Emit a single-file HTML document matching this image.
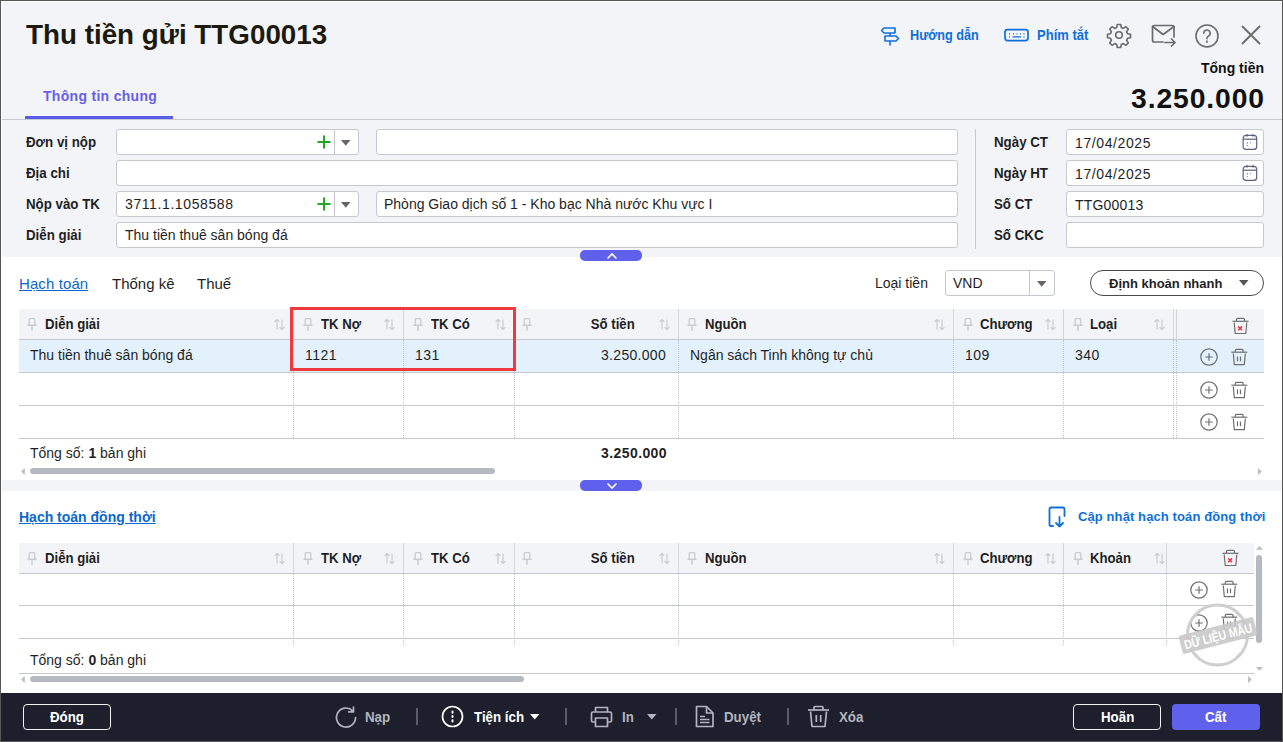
<!DOCTYPE html>
<html><head><meta charset="utf-8">
<style>
*{box-sizing:border-box;margin:0;padding:0}
html,body{width:1283px;height:742px;overflow:hidden;background:#fff}
body{position:relative;font-family:"Liberation Sans",sans-serif;color:#1f1f1f}
.a{position:absolute}
.t{position:absolute;white-space:nowrap;line-height:1}
.b{font-weight:bold}
.r14{font-size:14px}
.n14{font-size:14px;letter-spacing:.6px}
.b13{font-size:13px;font-weight:bold}
.lb{letter-spacing:.2px}
.hl2{font-size:14px;font-weight:bold;transform:scaleX(.95);transform-origin:0 0}
.hh{font-size:14px;font-weight:bold;transform:scaleX(.94);transform-origin:0 0}
.hr{transform-origin:100% 0}
.ff{font-size:14px;font-weight:bold;transform:scaleX(.95);transform-origin:0 0}
.inp{position:absolute;background:#fff;border:1px solid #c6c8d0;border-radius:3px;height:26px}
.hl{position:absolute;height:1px;background:#c9cbd3}
.vl{position:absolute;width:1px;background:#c9cbd3}
.vd{position:absolute;width:0;border-left:1px dotted #c2c4cc}
svg{position:absolute;overflow:visible}
</style></head><body>
<!-- outer frame -->
<div class="a" style="left:0;top:0;width:1283px;height:742px;background:#fff"></div>
<!-- header + form bg -->
<div class="a" style="left:1px;top:1px;width:1281px;height:256px;background:#f3f4f8"></div>

<!-- TITLE -->
<div class="t b" style="left:26px;top:21px;font-size:27.8px;color:#1c1a0e">Thu tiền gửi TTG00013</div>

<!-- header right -->
<svg style="left:880px;top:26px" width="20" height="20" viewBox="0 0 20 20" fill="none" stroke="#0f6fdb" stroke-width="1.6" stroke-linejoin="round">
 <path d="M4 2H15V7H4L1.5 4.5Z"/><path d="M5 10H16L18.5 12.5L16 15H5Z"/><path d="M10 7V10M10 15V19.5"/>
</svg>
<div class="t b" style="left:909.8px;top:28.2px;font-size:14px;transform:scaleX(.905);transform-origin:0 0;color:#0f6fdb">Hướng dẫn</div>
<svg style="left:1004px;top:28px" width="26" height="14" viewBox="0 0 26 14" fill="none" stroke="#0f6fdb">
 <rect x="1" y="1.6" width="23" height="11" rx="2.5" stroke-width="1.7"/>
 <path d="M5 5.8h1M9 5.8h1M12.5 5.8h1M16 5.8h1M19.5 5.8h1M5 8.8h1M8.5 8.8h8.5M19.5 8.8h1" stroke-width="1.2"/>
</svg>
<div class="t b" style="left:1037px;top:28.2px;font-size:14px;transform:scaleX(.93);transform-origin:0 0;color:#0f6fdb">Phím tắt</div>
<!-- gear -->
<svg style="left:1107px;top:23px" width="24" height="24" viewBox="0 0 24 24" fill="none" stroke="#6b6b6b" stroke-width="1.6" stroke-linejoin="round">
 <path d="M10.3 1.5h3.4l.6 3 2 .9 2.6-1.7 2.4 2.4-1.7 2.6.9 2 3 .6v3.4l-3 .6-.9 2 1.7 2.6-2.4 2.4-2.6-1.7-2 .9-.6 3h-3.4l-.6-3-2-.9-2.6 1.7-2.4-2.4 1.7-2.6-.9-2-3-.6v-3.4l3-.6.9-2-1.7-2.6 2.4-2.4 2.6 1.7 2-.9z"/>
 <circle cx="12" cy="12" r="3.3"/>
</svg>
<!-- mail -->
<svg style="left:1150px;top:24px" width="27" height="24" viewBox="0 0 27 24" fill="none" stroke="#6b6b6b" stroke-width="1.7" stroke-linecap="round" stroke-linejoin="round">
 <path d="M13 18H4.5Q2.5 18 2.5 16V3.5Q2.5 1.5 4.5 1.5H22Q24 1.5 24 3.5V13"/><path d="M2.5 2.5L13.2 10.5L24 2.5"/><path d="M15 18.5H25M21.5 15L25 18.5L21.5 22"/>
</svg>
<!-- help -->
<svg style="left:1195px;top:24px" width="24" height="24" viewBox="0 0 24 24" fill="none" stroke="#6b6b6b" stroke-width="1.6" stroke-linecap="round">
 <circle cx="12" cy="12" r="11"/><path d="M8.8 9.2a3.2 3.2 0 1 1 4.6 2.9c-.9.5-1.4 1.1-1.4 2.1v.6"/><circle cx="12" cy="17.6" r=".4" fill="#6b6b6b"/>
</svg>
<!-- close -->
<svg style="left:1241px;top:25px" width="20" height="20" viewBox="0 0 20 20" fill="none" stroke="#6b6b6b" stroke-width="1.8">
 <path d="M1 1L19 19M19 1L1 19"/>
</svg>

<div class="t b" style="right:19px;top:61px;font-size:14px;color:#111">Tổng tiền</div>
<div class="t b" style="right:18px;top:83.5px;font-size:28.3px;letter-spacing:.9px;color:#111">3.250.000</div>

<!-- tab -->
<div class="t b" style="left:43px;top:89px;font-size:14px;letter-spacing:.3px;color:#6660e6">Thông tin chung</div>
<div class="a" style="left:25px;top:116px;width:148px;height:3px;background:#5b5bea"></div>
<div class="hl" style="left:1px;top:119px;width:1281px;background:#c8cad1"></div>

<!-- FORM -->
<div class="t hl2" style="left:25.5px;top:135.25px">Đơn vị nộp</div>
<div class="t hl2" style="left:25.5px;top:166.25px">Địa chi</div>
<div class="t hl2" style="left:25.5px;top:197.25px">Nộp vào TK</div>
<div class="t hl2" style="left:25.5px;top:228.25px">Diễn giải</div>

<div class="inp" style="left:116px;top:129px;width:243px"></div>
<div class="vl" style="left:334px;top:130px;height:24px;background:#c6c8d0"></div>
<svg style="left:317px;top:135px" width="14" height="14" viewBox="0 0 14 14" stroke="#22a722" stroke-width="2"><path d="M7 0.5V13.5M0.5 7H13.5"/></svg>
<svg style="left:341px;top:140px" width="10" height="6" viewBox="0 0 10 6"><path d="M0 0H9.5L4.75 5.8Z" fill="#666"/></svg>
<div class="inp" style="left:376px;top:129px;width:582px"></div>

<div class="inp" style="left:116px;top:160px;width:842px"></div>

<div class="inp" style="left:116px;top:191px;width:243px"></div>
<div class="vl" style="left:334px;top:192px;height:24px;background:#c6c8d0"></div>
<svg style="left:317px;top:197px" width="14" height="14" viewBox="0 0 14 14" stroke="#22a722" stroke-width="2"><path d="M7 0.5V13.5M0.5 7H13.5"/></svg>
<svg style="left:341px;top:202px" width="10" height="6" viewBox="0 0 10 6"><path d="M0 0H9.5L4.75 5.8Z" fill="#666"/></svg>
<div class="t n14" style="left:125px;top:197px">3711.1.1058588</div>
<div class="inp" style="left:376px;top:191px;width:582px"></div>
<div class="t r14" style="left:384px;top:197px">Phòng Giao dịch số 1 - Kho bạc Nhà nước Khu vực I</div>

<div class="inp" style="left:116px;top:222px;width:842px"></div>
<div class="t r14" style="left:125px;top:228px">Thu tiền thuê sân bóng đá</div>

<!-- right form -->
<div class="vl" style="left:975px;top:129px;height:120px;background:#c6c8d0"></div>
<div class="t hl2" style="left:993.5px;top:135.25px">Ngày CT</div>
<div class="t hl2" style="left:993.5px;top:166.25px">Ngày HT</div>
<div class="t hl2" style="left:993.5px;top:197.25px">Số CT</div>
<div class="t hl2" style="left:993.5px;top:228.25px">Số CKC</div>
<div class="inp" style="left:1066px;top:129px;width:198px"></div>
<div class="inp" style="left:1066px;top:160px;width:198px"></div>
<div class="inp" style="left:1066px;top:191px;width:198px"></div>
<div class="inp" style="left:1066px;top:222px;width:198px"></div>
<div class="t n14" style="left:1075px;top:136px">17/04/2025</div>
<svg style="left:1242px;top:134px" width="16" height="16" viewBox="0 0 16 16" fill="none" stroke="#5b6180" stroke-width="1.2"><rect x="1.1" y="1.4" width="13.6" height="14" rx="3"/><path d="M1.1 5.2H14.7"/><path d="M5 .2V2.4M11 .2V2.4" stroke-width="1.5"/><path d="M5.3 8.3V9.6M8 8.8H8.8M5.3 11.2V11.9" stroke-width="1.1"/></svg>
<svg style="left:1242px;top:165px" width="16" height="16" viewBox="0 0 16 16" fill="none" stroke="#5b6180" stroke-width="1.2"><rect x="1.1" y="1.4" width="13.6" height="14" rx="3"/><path d="M1.1 5.2H14.7"/><path d="M5 .2V2.4M11 .2V2.4" stroke-width="1.5"/><path d="M5.3 8.3V9.6M8 8.8H8.8M5.3 11.2V11.9" stroke-width="1.1"/></svg>
<div class="t n14" style="left:1075px;top:167px">17/04/2025</div>
<div class="t n14" style="left:1075px;top:197.5px;letter-spacing:.2px">TTG00013</div>

<!-- collapse btn -->
<div class="a" style="left:580px;top:250px;width:62px;height:11px;border-radius:5px;background:#5f60ec"></div>
<svg style="left:606px;top:252px" width="12" height="8" viewBox="0 0 12 8" fill="none" stroke="#fff" stroke-width="1.6"><path d="M1.5 6.5L6 2L10.5 6.5"/></svg>

<!-- GEN START -->
<!-- tabs -->
<div class="t" style="left:19px;top:276px;font-size:15px;letter-spacing:.1px;color:#0d66c9;text-decoration:underline;text-underline-offset:1px">Hạch toán</div>
<div class="t" style="left:112px;top:276px;font-size:15px">Thống kê</div>
<div class="t" style="left:197px;top:276px;font-size:15px">Thuế</div>
<div class="t r14" style="left:875px;top:276px">Loại tiền</div>
<div class="inp" style="left:945px;top:270px;width:110px"></div>
<div class="vl" style="left:1029px;top:271px;height:24px;background:#c6c8d0"></div>
<div class="t r14" style="left:953px;top:276px">VND</div>
<svg style="left:1037px;top:281px" width="10" height="6" viewBox="0 0 10 6"><path d="M0 0H9.5L4.75 5.8Z" fill="#666"/></svg>
<div class="a" style="left:1090px;top:270px;width:174px;height:26px;border:1px solid #4a4a4a;border-radius:13px;background:#fff"></div>
<div class="t b13" style="left:1109px;top:277px">Định khoản nhanh</div>
<svg style="left:1239px;top:280px" width="10" height="6" viewBox="0 0 10 6"><path d="M0 0H9.5L4.75 5.8Z" fill="#555"/></svg>
<div class="a" style="left:19px;top:309px;width:1245px;height:30px;background:#f3f4f8"></div>
<div class="hl" style="left:19px;top:339px;width:1245px;background:#c6c8cf"></div>
<div class="a" style="left:19px;top:340px;width:1245px;height:32px;background:#e3f1fd"></div>
<div class="hl" style="left:19px;top:372px;width:1245px;background:#c6c8cf"></div>
<div class="hl" style="left:19px;top:405px;width:1245px;background:#c6c8cf"></div>
<div class="hl" style="left:19px;top:438px;width:1245px;background:#c6c8cf"></div>
<div class="vl" style="left:293px;top:309px;height:30px;background:#d3d5db"></div>
<div class="vd" style="left:293px;top:340px;height:98px"></div>
<div class="vl" style="left:403px;top:309px;height:30px;background:#d3d5db"></div>
<div class="vd" style="left:403px;top:340px;height:98px"></div>
<div class="vl" style="left:514px;top:309px;height:30px;background:#d3d5db"></div>
<div class="vd" style="left:514px;top:340px;height:98px"></div>
<div class="vl" style="left:678px;top:309px;height:30px;background:#d3d5db"></div>
<div class="vd" style="left:678px;top:340px;height:98px"></div>
<div class="vl" style="left:953px;top:309px;height:30px;background:#d3d5db"></div>
<div class="vd" style="left:953px;top:340px;height:98px"></div>
<div class="vl" style="left:1063px;top:309px;height:30px;background:#d3d5db"></div>
<div class="vd" style="left:1063px;top:340px;height:98px"></div>
<div class="vl" style="left:1173px;top:309px;height:30px;background:#d3d5db"></div>
<div class="vd" style="left:1173px;top:340px;height:98px"></div>
<div class="vl" style="left:1176px;top:309px;height:30px;background:#d3d5db"></div>
<div class="vd" style="left:1176px;top:340px;height:98px"></div>
<svg style="left:27px;top:318px" width="10" height="13" viewBox="0 0 10 13" fill="none" stroke="#c9ccd2" stroke-width="1.3" stroke-linejoin="round"><path d="M2.2 7V1.8Q2.2.7 3.3.7H6.7Q7.8.7 7.8 1.8V7"/><path d="M.5 7.3H9.5" stroke-width="1.5"/><path d="M5 7.5V12.7" stroke-width="1.5"/></svg>
<svg style="left:303px;top:318px" width="10" height="13" viewBox="0 0 10 13" fill="none" stroke="#c9ccd2" stroke-width="1.3" stroke-linejoin="round"><path d="M2.2 7V1.8Q2.2.7 3.3.7H6.7Q7.8.7 7.8 1.8V7"/><path d="M.5 7.3H9.5" stroke-width="1.5"/><path d="M5 7.5V12.7" stroke-width="1.5"/></svg>
<svg style="left:413px;top:318px" width="10" height="13" viewBox="0 0 10 13" fill="none" stroke="#c9ccd2" stroke-width="1.3" stroke-linejoin="round"><path d="M2.2 7V1.8Q2.2.7 3.3.7H6.7Q7.8.7 7.8 1.8V7"/><path d="M.5 7.3H9.5" stroke-width="1.5"/><path d="M5 7.5V12.7" stroke-width="1.5"/></svg>
<svg style="left:522px;top:318px" width="10" height="13" viewBox="0 0 10 13" fill="none" stroke="#c9ccd2" stroke-width="1.3" stroke-linejoin="round"><path d="M2.2 7V1.8Q2.2.7 3.3.7H6.7Q7.8.7 7.8 1.8V7"/><path d="M.5 7.3H9.5" stroke-width="1.5"/><path d="M5 7.5V12.7" stroke-width="1.5"/></svg>
<svg style="left:687px;top:318px" width="10" height="13" viewBox="0 0 10 13" fill="none" stroke="#c9ccd2" stroke-width="1.3" stroke-linejoin="round"><path d="M2.2 7V1.8Q2.2.7 3.3.7H6.7Q7.8.7 7.8 1.8V7"/><path d="M.5 7.3H9.5" stroke-width="1.5"/><path d="M5 7.5V12.7" stroke-width="1.5"/></svg>
<svg style="left:963px;top:318px" width="10" height="13" viewBox="0 0 10 13" fill="none" stroke="#c9ccd2" stroke-width="1.3" stroke-linejoin="round"><path d="M2.2 7V1.8Q2.2.7 3.3.7H6.7Q7.8.7 7.8 1.8V7"/><path d="M.5 7.3H9.5" stroke-width="1.5"/><path d="M5 7.5V12.7" stroke-width="1.5"/></svg>
<svg style="left:1073px;top:318px" width="10" height="13" viewBox="0 0 10 13" fill="none" stroke="#c9ccd2" stroke-width="1.3" stroke-linejoin="round"><path d="M2.2 7V1.8Q2.2.7 3.3.7H6.7Q7.8.7 7.8 1.8V7"/><path d="M.5 7.3H9.5" stroke-width="1.5"/><path d="M5 7.5V12.7" stroke-width="1.5"/></svg>
<svg style="left:274px;top:319px" width="11" height="11" viewBox="0 0 11 11" fill="none" stroke="#c9ccd2" stroke-width="1.2"><path d="M3 .5V10.5M.6 2.8L3 .5L5.4 2.8"/><path d="M8 .5V10.5M5.6 8.2L8 10.5L10.4 8.2"/></svg>
<svg style="left:384px;top:319px" width="11" height="11" viewBox="0 0 11 11" fill="none" stroke="#c9ccd2" stroke-width="1.2"><path d="M3 .5V10.5M.6 2.8L3 .5L5.4 2.8"/><path d="M8 .5V10.5M5.6 8.2L8 10.5L10.4 8.2"/></svg>
<svg style="left:495px;top:319px" width="11" height="11" viewBox="0 0 11 11" fill="none" stroke="#c9ccd2" stroke-width="1.2"><path d="M3 .5V10.5M.6 2.8L3 .5L5.4 2.8"/><path d="M8 .5V10.5M5.6 8.2L8 10.5L10.4 8.2"/></svg>
<svg style="left:659px;top:319px" width="11" height="11" viewBox="0 0 11 11" fill="none" stroke="#c9ccd2" stroke-width="1.2"><path d="M3 .5V10.5M.6 2.8L3 .5L5.4 2.8"/><path d="M8 .5V10.5M5.6 8.2L8 10.5L10.4 8.2"/></svg>
<svg style="left:934px;top:319px" width="11" height="11" viewBox="0 0 11 11" fill="none" stroke="#c9ccd2" stroke-width="1.2"><path d="M3 .5V10.5M.6 2.8L3 .5L5.4 2.8"/><path d="M8 .5V10.5M5.6 8.2L8 10.5L10.4 8.2"/></svg>
<svg style="left:1045px;top:319px" width="11" height="11" viewBox="0 0 11 11" fill="none" stroke="#c9ccd2" stroke-width="1.2"><path d="M3 .5V10.5M.6 2.8L3 .5L5.4 2.8"/><path d="M8 .5V10.5M5.6 8.2L8 10.5L10.4 8.2"/></svg>
<svg style="left:1154px;top:319px" width="11" height="11" viewBox="0 0 11 11" fill="none" stroke="#c9ccd2" stroke-width="1.2"><path d="M3 .5V10.5M.6 2.8L3 .5L5.4 2.8"/><path d="M8 .5V10.5M5.6 8.2L8 10.5L10.4 8.2"/></svg>
<div class="t hh" style="left:45px;top:316.65px">Diễn giải</div>
<div class="t hh" style="left:321px;top:316.65px">TK Nợ</div>
<div class="t hh" style="left:431px;top:316.65px">TK Có</div>
<div class="t hh hr" style="right:648.5px;top:316.65px">Số tiền</div>
<div class="t hh" style="left:705px;top:316.65px">Nguồn</div>
<div class="t hh" style="left:980px;top:316.65px">Chương</div>
<div class="t hh" style="left:1090px;top:316.65px">Loại</div>
<svg style="left:1232px;top:317.5px" width="17" height="17" viewBox="0 0 17 17" fill="none" stroke="#6f6f6f" stroke-width="1.2" stroke-linejoin="round"><path d="M.5 3.3H16.5"/><path d="M4.5 3.3V1.6Q4.5.4 5.7.4H11.3Q12.5.4 12.5 1.6V3.3"/><path d="M2.2 4.5L3.2 15.5H13.8L14.8 4.5"/><path d="M6.2 8.4L10 12.2M10 8.4L6.2 12.2" stroke="#ef3340" stroke-width="1.5"/></svg>
<div class="t r14" style="left:30px;top:348.15px">Thu tiền thuê sân bóng đá</div>
<div class="t n14" style="left:305px;top:348.15px;letter-spacing:.5px">1121</div>
<div class="t n14" style="left:415px;top:348.15px;letter-spacing:.5px">131</div>
<div class="t n14" style="right:617px;top:348.15px;letter-spacing:.3px">3.250.000</div>
<div class="t r14" style="left:690px;top:348.15px">Ngân sách Tinh không tự chủ</div>
<div class="t n14" style="left:965px;top:348.15px;letter-spacing:.5px">109</div>
<div class="t n14" style="left:1075px;top:348.15px;letter-spacing:.5px">340</div>
<svg style="left:1199.5px;top:348px" width="18" height="18" viewBox="0 0 18 18" fill="none" stroke="#6f6f6f" stroke-width="1.2"><circle cx="9" cy="9" r="8.2"/><path d="M5.2 9H12.8M9 5.2V12.8"/></svg>
<svg style="left:1231px;top:348.7px" width="17" height="17" viewBox="0 0 17 17" fill="none" stroke="#6f6f6f" stroke-width="1.2" stroke-linejoin="round"><path d="M.3 3.2H16.3"/><path d="M4.3 3.2V1.5Q4.3.3 5.5.3H10.9Q12.1.3 12.1 1.5V3.2"/><path d="M2.3 4.5L3.3 15.7H13.3L14.3 4.5"/><path d="M6.5 7.6V12.2M9.5 7.6V12.2"/></svg>
<svg style="left:1199.5px;top:381px" width="18" height="18" viewBox="0 0 18 18" fill="none" stroke="#6f6f6f" stroke-width="1.2"><circle cx="9" cy="9" r="8.2"/><path d="M5.2 9H12.8M9 5.2V12.8"/></svg>
<svg style="left:1231px;top:381.7px" width="17" height="17" viewBox="0 0 17 17" fill="none" stroke="#6f6f6f" stroke-width="1.2" stroke-linejoin="round"><path d="M.3 3.2H16.3"/><path d="M4.3 3.2V1.5Q4.3.3 5.5.3H10.9Q12.1.3 12.1 1.5V3.2"/><path d="M2.3 4.5L3.3 15.7H13.3L14.3 4.5"/><path d="M6.5 7.6V12.2M9.5 7.6V12.2"/></svg>
<svg style="left:1199.5px;top:413px" width="18" height="18" viewBox="0 0 18 18" fill="none" stroke="#6f6f6f" stroke-width="1.2"><circle cx="9" cy="9" r="8.2"/><path d="M5.2 9H12.8M9 5.2V12.8"/></svg>
<svg style="left:1231px;top:413.7px" width="17" height="17" viewBox="0 0 17 17" fill="none" stroke="#6f6f6f" stroke-width="1.2" stroke-linejoin="round"><path d="M.3 3.2H16.3"/><path d="M4.3 3.2V1.5Q4.3.3 5.5.3H10.9Q12.1.3 12.1 1.5V3.2"/><path d="M2.3 4.5L3.3 15.7H13.3L14.3 4.5"/><path d="M6.5 7.6V12.2M9.5 7.6V12.2"/></svg>
<div class="a" style="left:290px;top:307px;width:226px;height:64px;border:3px solid #f0393f"></div>
<div class="t r14" style="left:30px;top:446.15px">Tổng số: <b>1</b> bản ghi</div>
<div class="t b" style="right:616px;top:446.15px;font-size:14px;letter-spacing:.4px">3.250.000</div>
<svg style="left:21px;top:468px" width="4" height="7" viewBox="0 0 4 7"><path d="M3.8 0V7L0 3.5Z" fill="#b9bcc3"/></svg>
<div class="a" style="left:30px;top:468px;width:465px;height:6px;border-radius:3px;background:#b5b9c1"></div>
<svg style="left:1258px;top:468px" width="4" height="7" viewBox="0 0 4 7"><path d="M0 0V7L3.8 3.5Z" fill="#b9bcc3"/></svg>
<div class="a" style="left:1px;top:480px;width:1281px;height:11px;background:#f3f4f8"></div>
<div class="a" style="left:580px;top:480px;width:62px;height:11px;border-radius:5px;background:#5f60ec"></div>
<svg style="left:606px;top:482px" width="12" height="8" viewBox="0 0 12 8" fill="none" stroke="#fff" stroke-width="1.6"><path d="M1.5 1.5L6 6L10.5 1.5"/></svg>
<div class="t b" style="left:19px;top:510px;font-size:14px;color:#0b68cc;text-decoration:underline;text-underline-offset:1px">Hạch toán đồng thời</div>
<svg style="left:1048px;top:506px" width="19" height="22" viewBox="0 0 19 22" fill="none" stroke="#0f6fdb" stroke-width="1.8" stroke-linecap="round" stroke-linejoin="round"><path d="M5 20H3Q1.5 20 1.5 18.5V3Q1.5 1.5 3 1.5H15Q16.5 1.5 16.5 3V10"/><path d="M11.5 11V20.5M8 17L11.5 20.5L15 17"/></svg>
<div class="t b13" style="left:1078px;top:510px;letter-spacing:.1px;color:#0f6fdb">Cập nhật hạch toán đồng thời</div>
<div class="a" style="left:19px;top:543px;width:1235px;height:30px;background:#f3f4f8"></div>
<div class="hl" style="left:19px;top:573px;width:1235px;background:#c6c8cf"></div>
<div class="hl" style="left:19px;top:605px;width:1235px;background:#c6c8cf"></div>
<div class="hl" style="left:19px;top:638px;width:1235px;background:#c6c8cf"></div>
<div class="vl" style="left:293px;top:543px;height:30px;background:#d3d5db"></div>
<div class="vd" style="left:293px;top:574px;height:71px"></div>
<div class="vl" style="left:403px;top:543px;height:30px;background:#d3d5db"></div>
<div class="vd" style="left:403px;top:574px;height:71px"></div>
<div class="vl" style="left:514px;top:543px;height:30px;background:#d3d5db"></div>
<div class="vd" style="left:514px;top:574px;height:71px"></div>
<div class="vl" style="left:678px;top:543px;height:30px;background:#d3d5db"></div>
<div class="vd" style="left:678px;top:574px;height:71px"></div>
<div class="vl" style="left:953px;top:543px;height:30px;background:#d3d5db"></div>
<div class="vd" style="left:953px;top:574px;height:71px"></div>
<div class="vl" style="left:1063px;top:543px;height:30px;background:#d3d5db"></div>
<div class="vd" style="left:1063px;top:574px;height:71px"></div>
<div class="vl" style="left:1166px;top:543px;height:30px;background:#d3d5db"></div>
<div class="vd" style="left:1166px;top:574px;height:71px"></div>
<svg style="left:27px;top:552px" width="10" height="13" viewBox="0 0 10 13" fill="none" stroke="#c9ccd2" stroke-width="1.3" stroke-linejoin="round"><path d="M2.2 7V1.8Q2.2.7 3.3.7H6.7Q7.8.7 7.8 1.8V7"/><path d="M.5 7.3H9.5" stroke-width="1.5"/><path d="M5 7.5V12.7" stroke-width="1.5"/></svg>
<svg style="left:303px;top:552px" width="10" height="13" viewBox="0 0 10 13" fill="none" stroke="#c9ccd2" stroke-width="1.3" stroke-linejoin="round"><path d="M2.2 7V1.8Q2.2.7 3.3.7H6.7Q7.8.7 7.8 1.8V7"/><path d="M.5 7.3H9.5" stroke-width="1.5"/><path d="M5 7.5V12.7" stroke-width="1.5"/></svg>
<svg style="left:413px;top:552px" width="10" height="13" viewBox="0 0 10 13" fill="none" stroke="#c9ccd2" stroke-width="1.3" stroke-linejoin="round"><path d="M2.2 7V1.8Q2.2.7 3.3.7H6.7Q7.8.7 7.8 1.8V7"/><path d="M.5 7.3H9.5" stroke-width="1.5"/><path d="M5 7.5V12.7" stroke-width="1.5"/></svg>
<svg style="left:522px;top:552px" width="10" height="13" viewBox="0 0 10 13" fill="none" stroke="#c9ccd2" stroke-width="1.3" stroke-linejoin="round"><path d="M2.2 7V1.8Q2.2.7 3.3.7H6.7Q7.8.7 7.8 1.8V7"/><path d="M.5 7.3H9.5" stroke-width="1.5"/><path d="M5 7.5V12.7" stroke-width="1.5"/></svg>
<svg style="left:687px;top:552px" width="10" height="13" viewBox="0 0 10 13" fill="none" stroke="#c9ccd2" stroke-width="1.3" stroke-linejoin="round"><path d="M2.2 7V1.8Q2.2.7 3.3.7H6.7Q7.8.7 7.8 1.8V7"/><path d="M.5 7.3H9.5" stroke-width="1.5"/><path d="M5 7.5V12.7" stroke-width="1.5"/></svg>
<svg style="left:963px;top:552px" width="10" height="13" viewBox="0 0 10 13" fill="none" stroke="#c9ccd2" stroke-width="1.3" stroke-linejoin="round"><path d="M2.2 7V1.8Q2.2.7 3.3.7H6.7Q7.8.7 7.8 1.8V7"/><path d="M.5 7.3H9.5" stroke-width="1.5"/><path d="M5 7.5V12.7" stroke-width="1.5"/></svg>
<svg style="left:1073px;top:552px" width="10" height="13" viewBox="0 0 10 13" fill="none" stroke="#c9ccd2" stroke-width="1.3" stroke-linejoin="round"><path d="M2.2 7V1.8Q2.2.7 3.3.7H6.7Q7.8.7 7.8 1.8V7"/><path d="M.5 7.3H9.5" stroke-width="1.5"/><path d="M5 7.5V12.7" stroke-width="1.5"/></svg>
<svg style="left:274px;top:553px" width="11" height="11" viewBox="0 0 11 11" fill="none" stroke="#c9ccd2" stroke-width="1.2"><path d="M3 .5V10.5M.6 2.8L3 .5L5.4 2.8"/><path d="M8 .5V10.5M5.6 8.2L8 10.5L10.4 8.2"/></svg>
<svg style="left:384px;top:553px" width="11" height="11" viewBox="0 0 11 11" fill="none" stroke="#c9ccd2" stroke-width="1.2"><path d="M3 .5V10.5M.6 2.8L3 .5L5.4 2.8"/><path d="M8 .5V10.5M5.6 8.2L8 10.5L10.4 8.2"/></svg>
<svg style="left:495px;top:553px" width="11" height="11" viewBox="0 0 11 11" fill="none" stroke="#c9ccd2" stroke-width="1.2"><path d="M3 .5V10.5M.6 2.8L3 .5L5.4 2.8"/><path d="M8 .5V10.5M5.6 8.2L8 10.5L10.4 8.2"/></svg>
<svg style="left:659px;top:553px" width="11" height="11" viewBox="0 0 11 11" fill="none" stroke="#c9ccd2" stroke-width="1.2"><path d="M3 .5V10.5M.6 2.8L3 .5L5.4 2.8"/><path d="M8 .5V10.5M5.6 8.2L8 10.5L10.4 8.2"/></svg>
<svg style="left:934px;top:553px" width="11" height="11" viewBox="0 0 11 11" fill="none" stroke="#c9ccd2" stroke-width="1.2"><path d="M3 .5V10.5M.6 2.8L3 .5L5.4 2.8"/><path d="M8 .5V10.5M5.6 8.2L8 10.5L10.4 8.2"/></svg>
<svg style="left:1045px;top:553px" width="11" height="11" viewBox="0 0 11 11" fill="none" stroke="#c9ccd2" stroke-width="1.2"><path d="M3 .5V10.5M.6 2.8L3 .5L5.4 2.8"/><path d="M8 .5V10.5M5.6 8.2L8 10.5L10.4 8.2"/></svg>
<svg style="left:1154px;top:553px" width="11" height="11" viewBox="0 0 11 11" fill="none" stroke="#c9ccd2" stroke-width="1.2"><path d="M3 .5V10.5M.6 2.8L3 .5L5.4 2.8"/><path d="M8 .5V10.5M5.6 8.2L8 10.5L10.4 8.2"/></svg>
<div class="t hh" style="left:45px;top:550.65px">Diễn giải</div>
<div class="t hh" style="left:321px;top:550.65px">TK Nợ</div>
<div class="t hh" style="left:431px;top:550.65px">TK Có</div>
<div class="t hh hr" style="right:648.5px;top:550.65px">Số tiền</div>
<div class="t hh" style="left:705px;top:550.65px">Nguồn</div>
<div class="t hh" style="left:980px;top:550.65px">Chương</div>
<div class="t hh" style="left:1090px;top:550.65px">Khoản</div>
<svg style="left:1222px;top:550px" width="17" height="17" viewBox="0 0 17 17" fill="none" stroke="#6f6f6f" stroke-width="1.2" stroke-linejoin="round"><path d="M.5 3.3H16.5"/><path d="M4.5 3.3V1.6Q4.5.4 5.7.4H11.3Q12.5.4 12.5 1.6V3.3"/><path d="M2.2 4.5L3.2 15.5H13.8L14.8 4.5"/><path d="M6.2 8.4L10 12.2M10 8.4L6.2 12.2" stroke="#ef3340" stroke-width="1.5"/></svg>
<svg style="left:1189.5px;top:580.5px" width="18" height="18" viewBox="0 0 18 18" fill="none" stroke="#6f6f6f" stroke-width="1.2"><circle cx="9" cy="9" r="8.2"/><path d="M5.2 9H12.8M9 5.2V12.8"/></svg>
<svg style="left:1221px;top:581.2px" width="17" height="17" viewBox="0 0 17 17" fill="none" stroke="#6f6f6f" stroke-width="1.2" stroke-linejoin="round"><path d="M.3 3.2H16.3"/><path d="M4.3 3.2V1.5Q4.3.3 5.5.3H10.9Q12.1.3 12.1 1.5V3.2"/><path d="M2.3 4.5L3.3 15.7H13.3L14.3 4.5"/><path d="M6.5 7.6V12.2M9.5 7.6V12.2"/></svg>
<svg style="left:1189.5px;top:613.5px" width="18" height="18" viewBox="0 0 18 18" fill="none" stroke="#6f6f6f" stroke-width="1.2"><circle cx="9" cy="9" r="8.2"/><path d="M5.2 9H12.8M9 5.2V12.8"/></svg>
<svg style="left:1221px;top:614.2px" width="17" height="17" viewBox="0 0 17 17" fill="none" stroke="#6f6f6f" stroke-width="1.2" stroke-linejoin="round"><path d="M.3 3.2H16.3"/><path d="M4.3 3.2V1.5Q4.3.3 5.5.3H10.9Q12.1.3 12.1 1.5V3.2"/><path d="M2.3 4.5L3.3 15.7H13.3L14.3 4.5"/><path d="M6.5 7.6V12.2M9.5 7.6V12.2"/></svg>
<div class="t r14" style="left:30px;top:653.15px">Tổng số: <b>0</b> bản ghi</div>
<div class="hl" style="left:19px;top:673px;width:1235px;background:#c6c8cf"></div>
<svg style="left:21px;top:676px" width="4" height="7" viewBox="0 0 4 7"><path d="M3.8 0V7L0 3.5Z" fill="#b9bcc3"/></svg>
<div class="a" style="left:30px;top:676px;width:494px;height:6px;border-radius:3px;background:#b5b9c1"></div>
<svg style="left:1248px;top:676px" width="4" height="7" viewBox="0 0 4 7"><path d="M0 0V7L3.8 3.5Z" fill="#b9bcc3"/></svg>
<svg style="left:1256px;top:546px" width="7" height="4" viewBox="0 0 7 4"><path d="M0 3.8H7L3.5 0Z" fill="#b9bcc3"/></svg>
<div class="a" style="left:1256px;top:555px;width:6px;height:88px;border-radius:3px;background:#b5b9c1"></div>
<svg style="left:1256px;top:667px" width="7" height="4" viewBox="0 0 7 4"><path d="M0 0H7L3.5 3.8Z" fill="#b9bcc3"/></svg>
<svg style="left:1170px;top:595px" width="95" height="80" viewBox="0 0 95 80" fill="none">
<g stroke="#cfcfcf"><circle cx="47.5" cy="40" r="30" stroke-width="3"/><path d="M25 22A27 27 0 0 1 70 22M25 58A27 27 0 0 0 70 58" stroke-width="1.6"/></g>
<g transform="rotate(-14.5 48 40.5)"><rect x="9.5" y="31" width="77" height="19" rx="2" fill="#c9c9c9" fill-opacity=".9"/>
<text x="48" y="45.8" text-anchor="middle" font-family="Liberation Sans" font-weight="bold" font-size="13" textLength="70" lengthAdjust="spacingAndGlyphs" fill="#fff">DỮ LIỆU MẪU</text></g></svg>
<div class="a" style="left:1px;top:693px;width:1281px;height:48px;background:#1d1f2c"></div>
<div class="a" style="left:23px;top:704px;width:88px;height:26px;border:1.5px solid #f2f2f2;border-radius:4px"></div>
<div class="t ff" style="left:50px;top:709.75px;color:#fff">Đóng</div>
<svg style="left:334.5px;top:706px" width="23" height="23" viewBox="0 0 23 23" fill="none" stroke="#b3b4be" stroke-width="1.7" stroke-linecap="round" stroke-linejoin="round"><path d="M20.5 11.5A9.5 9.5 0 1 1 17.8 4.9"/><path d="M18.5 1V5.8H13.7"/></svg>
<div class="t ff" style="left:365px;top:709.75px;color:#b3b4be">Nạp</div>
<div class="a" style="left:416px;top:708px;width:2px;height:17px;background:#5a5c66"></div>
<svg style="left:441px;top:705px" width="23" height="23" viewBox="0 0 23 23" fill="none" stroke="#fff" stroke-width="1.7"><circle cx="11.5" cy="11.5" r="10"/><path d="M11.5 6.6V7.8M11.5 10.9V12.1M11.5 15.2V16.4" stroke-width="2" stroke-linecap="round"/></svg>
<div class="t ff" style="left:474px;top:709.75px;color:#fff">Tiện ích</div>
<svg style="left:530px;top:714px" width="10" height="6" viewBox="0 0 10 6"><path d="M0 0H9.5L4.75 5.5Z" fill="#fff"/></svg>
<div class="a" style="left:565px;top:708px;width:2px;height:17px;background:#5a5c66"></div>
<svg style="left:590px;top:705px" width="23" height="23" viewBox="0 0 23 23" fill="none" stroke="#b3b4be" stroke-width="1.7" stroke-linejoin="round"><path d="M5.5 7V2.5H17.5V7"/><path d="M5.5 17H3Q1.5 17 1.5 15.5V8.5Q1.5 7 3 7H20Q21.5 7 21.5 8.5V15.5Q21.5 17 20 17H17.5"/><path d="M5.5 13H17.5V21.5H5.5Z"/></svg>
<div class="t ff" style="left:622px;top:709.75px;color:#b3b4be">In</div>
<svg style="left:647px;top:714px" width="10" height="6" viewBox="0 0 10 6"><path d="M0 0H9.5L4.75 5.5Z" fill="#b3b4be"/></svg>
<div class="a" style="left:675px;top:708px;width:2px;height:17px;background:#5a5c66"></div>
<svg style="left:694px;top:705px" width="21" height="23" viewBox="0 0 21 23" fill="none" stroke="#b3b4be" stroke-width="1.7" stroke-linejoin="round"><path d="M2.5 1.5H12.5L19 8V21.5H2.5Z"/><path d="M12.5 1.5V8H19"/><path d="M6 11.5H11M6 14.5H15.5M6 17.5H15.5" stroke-width="1.5"/></svg>
<div class="t ff" style="left:724px;top:709.75px;color:#b3b4be">Duyệt</div>
<div class="a" style="left:787px;top:708px;width:2px;height:17px;background:#5a5c66"></div>
<svg style="left:807px;top:705px" width="23" height="23" viewBox="0 0 23 23" fill="none" stroke="#b3b4be" stroke-width="1.7" stroke-linejoin="round"><path d="M1 5H22"/><path d="M7 5V2.5Q7 1.5 8 1.5H15Q16 1.5 16 2.5V5"/><path d="M3.5 6.5L5 21.5H18L19.5 6.5"/><path d="M9.3 10V17M13.7 10V17"/></svg>
<div class="t ff" style="left:839px;top:709.75px;color:#b3b4be">Xóa</div>
<div class="a" style="left:1073px;top:704px;width:88px;height:26px;border:1.5px solid #f2f2f2;border-radius:4px"></div>
<div class="t ff" style="left:1101px;top:709.75px;color:#fff">Hoãn</div>
<div class="a" style="left:1172px;top:704px;width:88px;height:26px;border-radius:4px;background:#5f60ec"></div>
<div class="t ff" style="left:1205px;top:709.75px;color:#fff">Cất</div>
<div class="a" style="left:0;top:0;width:1283px;height:742px;border:1px solid #575757;pointer-events:none"></div>
<div class="a" style="left:1px;top:1px;width:1281px;height:1px;background:#fff"></div>
<div class="a" style="left:1px;top:1px;width:1px;height:692px;background:#fff"></div>
<!-- GEN END -->
</body></html>
